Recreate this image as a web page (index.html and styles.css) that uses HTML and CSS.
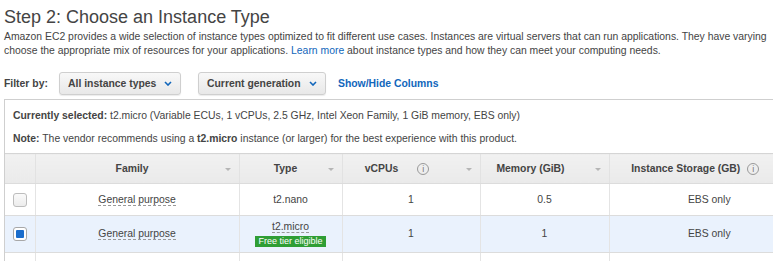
FILE: index.html
```html
<!DOCTYPE html>
<html lang="en">
<head>
    <meta charset="UTF-8">
    <title>Step 2: Choose an Instance Type</title>
    <link rel="stylesheet" href="styles.css">
</head>
<body>
    <h1>Step 2: Choose an Instance Type</h1>
    <p class="intro">Amazon EC2 provides a wide selection of instance types optimized to fit different use cases. Instances are virtual servers that can run applications. They have varying<br>choose the appropriate mix of resources for your applications. <a href="#">Learn more</a> about instance types and how they can meet your computing needs.</p>

    <div class="filter-bar">
        <span class="filter-label">Filter by:</span>
        <div class="select select-types">All instance types
            <svg class="chev" width="8" height="5" viewBox="0 0 8 5"><path d="M1 1l3 3 3-3" fill="none" stroke="#1166bb" stroke-width="1.6"/></svg>
        </div>
        <div class="select select-gen">Current generation
            <svg class="chev" width="8" height="5" viewBox="0 0 8 5"><path d="M1 1l3 3 3-3" fill="none" stroke="#1166bb" stroke-width="1.6"/></svg>
        </div>
        <a href="#" class="cols-link">Show/Hide Columns</a>
    </div>

    <div class="panel">
        <div class="summary">
            <p><b>Currently selected:</b> t2.micro (Variable ECUs, 1 vCPUs, 2.5 GHz, Intel Xeon Family, 1 GiB memory, EBS only)</p>
            <p><b>Note:</b> The vendor recommends using a <b>t2.micro</b> instance (or larger) for the best experience with this product.</p>
        </div>
        <table class="types">
            <colgroup>
                <col class="c-check">
                <col class="c-family">
                <col class="c-type">
                <col class="c-vcpu">
                <col class="c-mem">
                <col class="c-store">
            </colgroup>
            <thead>
                <tr>
                    <th></th>
                    <th><span class="th-inner">Family</span><span class="sort"></span></th>
                    <th><span class="th-inner">Type</span><span class="sort"></span></th>
                    <th class="th-shift"><span class="th-inner">vCPUs<i class="info wide">i</i></span><span class="sort"></span></th>
                    <th class="th-shift"><span class="th-inner">Memory (GiB)</span><span class="sort"></span></th>
                    <th class="th-shift"><span class="th-inner">Instance Storage (GB)<i class="info">i</i></span><span class="sort"></span></th>
                </tr>
            </thead>
            <tbody>
                <tr>
                    <td><span class="check"></span></td>
                    <td><span class="dotted">General purpose</span></td>
                    <td>t2.nano</td>
                    <td>1</td>
                    <td>0.5</td>
                    <td>EBS only</td>
                </tr>
                <tr class="selected">
                    <td><span class="check on"></span></td>
                    <td><span class="dotted">General purpose</span></td>
                    <td><span class="dotted">t2.micro</span><br><span class="badge">Free tier eligible</span></td>
                    <td>1</td>
                    <td>1</td>
                    <td>EBS only</td>
                </tr>
                <tr class="empty">
                    <td></td><td></td><td></td><td></td><td></td><td></td>
                </tr>
            </tbody>
        </table>
    </div>
</body>
</html>
```

FILE: styles.css
```css
* {
    margin: 0;
    padding: 0;
    box-sizing: border-box;
}
body {
    font-family: "Liberation Sans", Arial, sans-serif;
    font-size: 10.4px;
    color: #444;
    background: white;
    padding: 0 4px;
    overflow: hidden;
}
h1 {
    font-size: 18px;
    font-weight: normal;
    line-height: 24px;
    margin-top: 5px;
    color: #444;
}
.intro {
    margin-top: 1px;
    line-height: 14px;
    white-space: nowrap;
}
a {
    color: #1166bb;
    text-decoration: none;
}
.filter-bar {
    display: flex;
    align-items: center;
    margin-top: 14px;
    height: 23px;
}
.filter-label {
    font-weight: bold;
    width: 55px;
}
.select {
    position: relative;
    height: 23px;
    line-height: 21px;
    padding-left: 8px;
    font-weight: bold;
    border: 1px solid #cfcfcf;
    border-radius: 3px;
    background: linear-gradient(#f8f8f8, #e8e8e8);
    box-shadow: 0 1px 1px rgba(0,0,0,0.08);
}
.select-types {
    width: 122px;
}
.select-gen {
    width: 128px;
    margin-left: 17px;
}
.chev {
    position: absolute;
    right: 8px;
    top: 8px;
}
.cols-link {
    font-weight: bold;
    margin-left: 12px;
}
.panel {
    margin-top: 4px;
    width: 805px;
    border: 1px solid #cfcfcf;
    border-right: none;
    border-bottom: none;
}
.summary {
    padding: 8px 8px 6px 8px;
}
.summary p {
    line-height: 16px;
}
.summary p + p {
    margin-top: 7px;
}
.types {
    border-collapse: collapse;
    table-layout: fixed;
    width: 804px;
}
.c-check { width: 30px; }
.c-family { width: 204px; }
.c-type { width: 103px; }
.c-vcpu { width: 138px; }
.c-mem { width: 129px; }
.c-store { width: 200px; }
.types th {
    position: relative;
    height: 30px;
    background: linear-gradient(#f1f1f1, #eaeaea);
    font-weight: bold;
    border-top: 1px solid #d5d5d5;
    border-bottom: 1px solid #dcdcdc;
    border-left: 1px solid #e2e2e2;
    padding-right: 10px;
    text-align: center;
}
.types th.th-shift {
    padding-right: 28px;
}
.types th:first-child {
    border-left: none;
}
.th-inner {
    display: inline-flex;
    align-items: center;
}
.sort {
    position: absolute;
    right: 8px;
    top: 14px;
    border-left: 3px solid transparent;
    border-right: 3px solid transparent;
    border-top: 3px solid #b5b5b5;
}
.info {
    display: inline-flex;
    align-items: center;
    justify-content: center;
    width: 12px;
    height: 12px;
    margin-left: 7px;
    border: 1px solid #999;
    border-radius: 50%;
    font-style: normal;
    font-weight: normal;
    font-size: 9px;
    color: #777;
}
.info.wide {
    margin-left: 19px;
}
.types td {
    height: 32px;
    text-align: center;
    vertical-align: middle;
    border-bottom: 1px solid #dcdcdc;
    border-left: 1px solid #e4e4e4;
    line-height: 14px;
}
.types td:first-child {
    border-left: none;
}
.types .selected td {
    height: 37px;
    background: #eaf2fd;
}
.types .empty td {
    height: 20px;
}
.dotted {
    border-bottom: 1px dashed #999;
}
.badge {
    display: inline-block;
    margin-top: 2px;
    padding: 0 3px;
    font-size: 9px;
    line-height: 11px;
    color: white;
    background: #2f9e35;
}
.check {
    display: inline-block;
    vertical-align: middle;
    width: 14px;
    height: 14px;
    border: 1px solid #bdbdbd;
    border-radius: 3px;
    background: linear-gradient(#fafafa, #ececec);
    position: relative;
}
.check.on {
    border-color: #a8a8a8;
    background: white;
}
.check.on::after {
    content: "";
    position: absolute;
    left: 2px;
    top: 2px;
    width: 8px;
    height: 8px;
    border-radius: 1px;
    background: #1a6dcc;
}
```
